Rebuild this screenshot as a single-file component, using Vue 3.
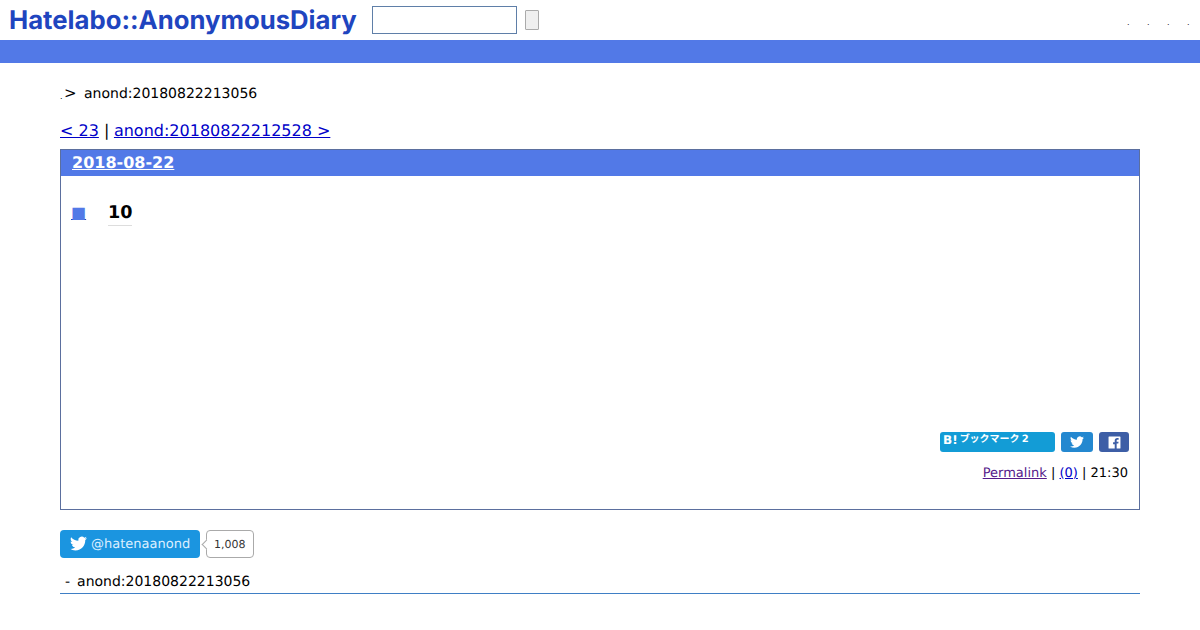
<script setup>
const headerLinks = ['.', '.', '.', '.']
</script>

<template>
  <div class="page">
    <header class="header">
      <div class="header-left">
        <a class="logo">Hatelabo::AnonymousDiary</a>
        <input class="search" type="text" />
        <button class="search-btn"></button>
      </div>
      <div class="header-right">
        <span v-for="(link, index) in headerLinks" :key="index" class="tiny-dot">{{ link }}</span>
      </div>
    </header>
    <div class="bluebar"></div>

    <main class="content">
      <div class="crumb">
        <span class="crumb-dot">.</span>
        <span class="crumb-gt">&gt;</span>
        <span class="crumb-text">anond:20180822213056</span>
      </div>

      <div class="pager">
        <a class="link" href="#">&lt; 23</a> | <a class="link next" href="#">anond:20180822212528 &gt;</a>
      </div>

      <section class="day">
        <h2 class="day-title"><a href="#">2018-08-22</a></h2>
        <div class="day-body">
          <h3 class="section-title">
            <a class="sanchor" href="#">■</a>
            <span class="section-num">10</span>
          </h3>
          <div class="spacer"></div>
          <div class="share">
            <a class="btn btn-hatena"><span class="hb">B!</span><span>ブックマーク</span><span class="hn">2</span></a>
            <a class="btn btn-tw">
              <svg viewBox="0 0 24 24" width="14" height="14"><path fill="#fff" d="M23.95 4.57a10 10 0 0 1-2.82.77 4.96 4.96 0 0 0 2.16-2.72c-.95.55-2 .95-3.12 1.18a4.92 4.92 0 0 0-8.38 4.48C7.69 8.1 4.07 6.13 1.64 3.16a4.82 4.82 0 0 0-.67 2.48c0 1.71.87 3.21 2.19 4.1a4.9 4.9 0 0 1-2.23-.62v.06a4.92 4.92 0 0 0 3.95 4.83 4.9 4.9 0 0 1-2.21.08 4.94 4.94 0 0 0 4.6 3.42A9.87 9.87 0 0 1 0 19.54a13.94 13.94 0 0 0 7.55 2.21c9.05 0 14-7.5 14-13.98 0-.21 0-.42-.02-.63a9.94 9.94 0 0 0 2.42-2.57z"/></svg>
            </a>
            <a class="btn btn-fb">
              <svg viewBox="0 0 24 24" width="13" height="13"><path fill="#fff" d="M2 1h20a1 1 0 0 1 1 1v20a1 1 0 0 1-1 1h-6v-9h3l.5-3.6H16V8.600c0-1 .3-1.700 1.800-1.700h1.800V3.700c-.3 0-1.400-.1-2.700-.1-2.700 0-4.500 1.600-4.500 4.600v3.200H9.400V15h3v8H2a1 1 0 0 1-1-1V2a1 1 0 0 1 1-1z"/></svg>
            </a>
          </div>
          <div class="sectionfooter">
            <a class="visited" href="#">Permalink</a> | <a class="link" href="#">(0)</a> | 21:30
          </div>
        </div>
      </section>

      <div class="follow">
        <a class="follow-btn">
          <svg class="follow-bird" viewBox="0 0 24 24" width="17" height="17"><path fill="#fff" d="M23.95 4.57a10 10 0 0 1-2.82.77 4.96 4.96 0 0 0 2.16-2.72c-.95.55-2 .95-3.12 1.18a4.92 4.92 0 0 0-8.38 4.48C7.69 8.1 4.07 6.13 1.64 3.16a4.82 4.82 0 0 0-.67 2.48c0 1.71.87 3.21 2.19 4.1a4.9 4.9 0 0 1-2.23-.62v.06a4.92 4.92 0 0 0 3.95 4.83 4.9 4.9 0 0 1-2.21.08 4.94 4.94 0 0 0 4.6 3.42A9.87 9.87 0 0 1 0 19.54a13.94 13.94 0 0 0 7.55 2.21c9.05 0 14-7.5 14-13.98 0-.21 0-.42-.02-.63a9.94 9.94 0 0 0 2.42-2.57z"/></svg>
          <span>@hatenaanond</span>
        </a>
        <span class="count">1,008</span>
      </div>

      <div class="bottom">
        <span class="bottom-dash">-</span>
        <span>anond:20180822213056</span>
      </div>
    </main>
  </div>
</template>

<style>
html, body {
  margin: 0;
  background: #fff;
}
</style>

<style scoped>
.page {
  font-family: "DejaVu Sans", sans-serif;
  font-size: 14px;
  color: #000;
  text-rendering: geometricPrecision;
}

.header {
  height: 40px;
  display: flex;
  justify-content: space-between;
  align-items: center;
}

.header-left {
  display: flex;
  align-items: center;
}

.logo {
  width: 372px;
  box-sizing: border-box;
  padding-left: 9px;
  font-family: Inter, sans-serif;
  font-weight: 700;
  font-size: 25.7px;
  color: #1f45bf;
  white-space: nowrap;
}

.search {
  width: 145px;
  height: 28px;
  box-sizing: border-box;
  border: 1px solid #5f7fa8;
  padding: 0;
  margin: 0;
  background: #fff;
}

.search-btn {
  width: 14px;
  height: 20px;
  margin: 0 0 0 8px;
  padding: 0;
  box-sizing: border-box;
  border: 1px solid #aaa;
  border-radius: 1px;
  background: #efefef;
}

.header-right {
  display: flex;
  gap: 17px;
  padding: 5px 10px 0 0;
}

.tiny-dot {
  font-size: 8px;
  width: 3px;
  color: #222;
}

.bluebar {
  height: 23px;
  background: #5279e7;
}

.content {
  padding: 0 60px;
}

.crumb {
  display: flex;
  align-items: center;
  height: 20px;
  margin-top: 20px;
}

.crumb-dot {
  font-size: 8px;
  width: 4px;
  padding-top: 6px;
}

.crumb-gt {
  width: 20px;
  font-size: 15px;
}

.crumb-text {
  padding-top: 2px;
}

.pager {
  margin-top: 18px;
  font-size: 16px;
  line-height: 19px;
}

.link {
  color: #0000c8;
}

.next {
  margin-left: -0.5px;
}

.visited {
  color: #551a8b;
}

.day {
  margin-top: 9px;
  height: 361px;
  box-sizing: border-box;
  border: 1px solid #5b6f9e;
  display: flex;
  flex-direction: column;
}

.day-title {
  margin: 0;
  height: 26px;
  line-height: 26px;
  padding-left: 11px;
  background: #5279e7;
  font-size: 16px;
  font-weight: 700;
}

.day-title a {
  color: #fff;
  text-decoration: underline;
}

.day-body {
  flex: 1;
  display: flex;
  flex-direction: column;
  padding: 0 10px 0 10px;
}

.section-title {
  margin: 24px 0 0;
  display: flex;
  align-items: center;
  font-size: 17.6px;
  line-height: 24px;
}

.sanchor {
  color: #5279e7;
  width: 16px;
  font-size: 16px;
  line-height: 22px;
  text-decoration: underline;
  text-decoration-color: #2244b8;
}

.section-num {
  margin-left: 21px;
  padding-top: 1px;
  border-bottom: 1px solid #ddd;
}

.spacer {
  flex: 1;
}

.share {
  display: flex;
  justify-content: flex-end;
  gap: 6px;
}

.btn {
  height: 20px;
  border-radius: 3px;
  display: flex;
  align-items: center;
  justify-content: center;
}

.btn-hatena {
  width: 115px;
  box-sizing: border-box;
  padding: 1px 0 0 3px;
  justify-content: flex-start;
  align-items: flex-start;
  background: #139cd6;
  color: #fff;
  font-family: "DejaVu Sans", "Noto Sans CJK JP", sans-serif;
  font-weight: 700;
  font-size: 10px;
  line-height: 14px;
}

.hb {
  font-size: 12px;
  margin-right: 2px;
}

.hn {
  margin-left: 2px;
}

.btn-tw {
  width: 32px;
  background: #2488d0;
}

.btn-fb {
  width: 30px;
  background: #3d5ea6;
}

.sectionfooter {
  margin: 13px 1px 27px 0;
  text-align: right;
  font-size: 13px;
  line-height: 17px;
}

.follow {
  margin-top: 20px;
  display: flex;
  align-items: center;
}

.follow-btn {
  width: 140px;
  height: 28px;
  box-sizing: border-box;
  padding-left: 10px;
  border-radius: 4px;
  background: #1b95e0;
  color: #dcefff;
  font-size: 13px;
  display: flex;
  align-items: center;
  gap: 4px;
}

.follow-bird {
  margin-top: -2px;
}

.count {
  position: relative;
  margin-left: 6px;
  height: 28px;
  box-sizing: border-box;
  padding: 0 7px;
  border: 1px solid #aaa;
  border-radius: 4px;
  font-size: 11px;
  line-height: 27px;
  color: #333;
}

.count::before {
  content: "";
  position: absolute;
  left: -4px;
  top: 10px;
  width: 6px;
  height: 6px;
  background: #fff;
  border-left: 1px solid #aaa;
  border-bottom: 1px solid #aaa;
  transform: rotate(45deg);
}

.bottom {
  margin-top: 16px;
  padding: 0 0 2px 5px;
  display: flex;
  gap: 7px;
  line-height: 17px;
  border-bottom: 1px solid #3f7fc5;
}
</style>
